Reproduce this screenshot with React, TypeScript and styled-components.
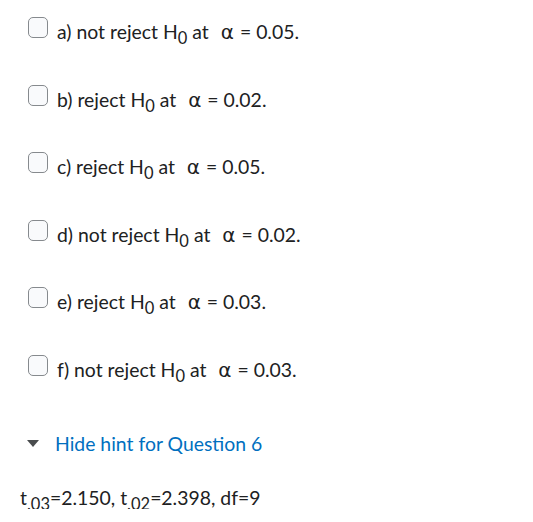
import React from 'react';
import styled, { createGlobalStyle } from 'styled-components';

const Global = createGlobalStyle`
  body {
    margin: 0;
    background: #ffffff;
    font-family: Lato, "Open Sans", sans-serif;
    color: #202122;
  }
`;

const Page = styled.div`
  padding: 17px 0 0 20px;
`;

const Options = styled.ul`
  list-style: none;
  margin: 0;
  padding: 0 0 0 8px;
  display: flex;
  flex-direction: column;
  gap: 41.6px;
`;

const Option = styled.li`
  display: flex;
  align-items: flex-start;
  gap: 9px;
  height: 26px;
  font-size: 19.4px;
  line-height: 23px;
`;

const Box = styled.span`
  width: 18px;
  height: 19px;
  border: 1px solid #868a8e;
  border-radius: 5px;
  background: #f9fafc;
  flex: none;
`;

const Label = styled.span`
  padding-top: 3px;
  white-space: nowrap;
`;

const Alpha = styled.span`
  font-family: "DejaVu Sans", sans-serif;
  font-size: 20px;
  margin: 0 1px 0 2px;
`;

const Sub = styled.sub`
  font-size: 0.85em;
  vertical-align: -0.3em;
  line-height: 0;
`;

const Hint = styled.div`
  display: flex;
  align-items: center;
  gap: 16px;
  height: 23px;
  margin: 51px 0 0 7px;
  font-size: 19.4px;
  line-height: 23px;
  color: #006fbf;
`;

const Caret = styled.span`
  width: 0;
  height: 0;
  border-left: 6.5px solid transparent;
  border-right: 6.5px solid transparent;
  border-top: 7px solid #494c4e;
`;

const Formula = styled.p`
  margin: 31px 0 0 0;
  height: 23px;
  font-size: 19.4px;
  line-height: 23px;
`;

const items = [
  { key: 'a', neg: true, alpha: '0.05' },
  { key: 'b', neg: false, alpha: '0.02' },
  { key: 'c', neg: false, alpha: '0.05' },
  { key: 'd', neg: true, alpha: '0.02' },
  { key: 'e', neg: false, alpha: '0.03' },
  { key: 'f', neg: true, alpha: '0.03' },
];

export default function App() {
  return (
    <Page>
      <Global />
      <Options>
        {items.map((it) => (
          <Option key={it.key}>
            <Box />
            <Label>
              {it.key}) {it.neg ? 'not ' : ''}reject H<Sub>0</Sub> at{'\u00a0\u00a0'}<Alpha>α</Alpha> = {it.alpha}.
            </Label>
          </Option>
        ))}
      </Options>
      <Hint>
        <Caret />
        <span>Hide hint for Question 6</span>
      </Hint>
      <Formula>
        t<Sub>.03</Sub>=2.150, t<Sub>.02</Sub>=2.398, df=9
      </Formula>
    </Page>
  );
}
